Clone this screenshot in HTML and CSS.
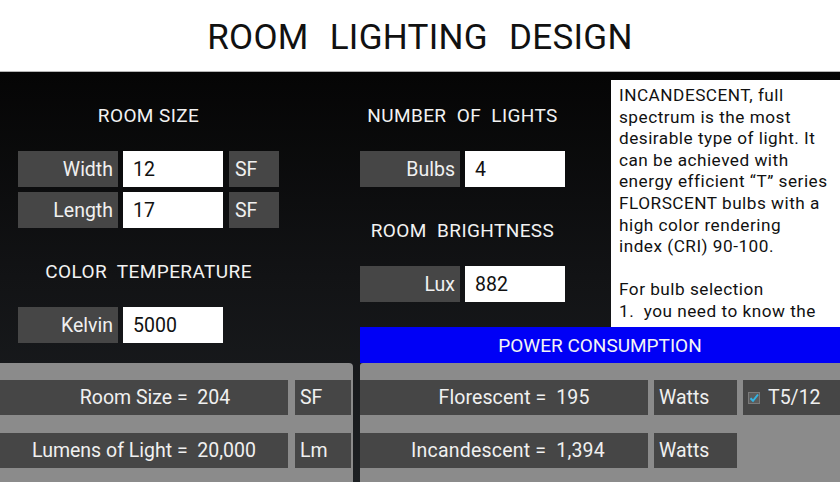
FILE: index.html
```html
<!DOCTYPE html>
<html>
<head>
<meta charset="utf-8">
<link rel="stylesheet" href="styles.css">
</head>
<body>
<div class="app">
  <header class="header"><h1 class="title">ROOM LIGHTING DESIGN</h1></header>
  <main class="main">
    <div class="col-left">
      <section class="section sec-left">
        <h2 class="heading">ROOM SIZE</h2>
        <div class="rows">
          <div class="row"><div class="label">Width</div><div class="input">12</div><div class="unit">SF</div></div>
          <div class="row"><div class="label">Length</div><div class="input">17</div><div class="unit">SF</div></div>
        </div>
      </section>
      <section class="section sec-left">
        <h2 class="heading">COLOR&nbsp; TEMPERATURE</h2>
        <div class="rows">
          <div class="row"><div class="label">Kelvin</div><div class="input">5000</div></div>
        </div>
      </section>
      <div class="panel panel-left">
        <div class="prow"><div class="result shift-a">Room Size =&nbsp; 204</div><div class="punit sf">SF</div></div>
        <div class="prow"><div class="result">Lumens of Light =&nbsp; 20,000</div><div class="punit sf">Lm</div></div>
      </div>
    </div>
    <div class="col-right">
      <div class="top-right">
        <div class="col-mid">
          <section class="section sec-mid">
            <h2 class="heading">NUMBER&nbsp; OF&nbsp; LIGHTS</h2>
            <div class="rows">
              <div class="row"><div class="label">Bulbs</div><div class="input">4</div></div>
            </div>
          </section>
          <section class="section sec-mid">
            <h2 class="heading">ROOM&nbsp; BRIGHTNESS</h2>
            <div class="rows">
              <div class="row"><div class="label">Lux</div><div class="input">882</div></div>
            </div>
          </section>
        </div>
        <div class="info">
          <p>INCANDESCENT, full<br>spectrum is the most<br>desirable type of light. It<br>can be achieved with<br>energy efficient “T” series<br>FLORSCENT bulbs with a<br>high color rendering<br>index (CRI) 90-100.</p>
          <p>For bulb selection<br>1.&nbsp; you need to know the</p>
        </div>
      </div>
      <div class="bar">POWER CONSUMPTION</div>
      <div class="panel panel-right">
        <div class="prow"><div class="result shift-b">Florescent =&nbsp; 195</div><div class="punit watts">Watts</div><div class="punit check"><svg class="cb" width="12" height="12" viewBox="0 0 12 12"><rect x="0.5" y="0.5" width="11" height="11" fill="#5c5c5c" stroke="#7a7a7a"/><path d="M2.5 6.2 L5 8.8 L10 2.5" fill="none" stroke="#33b5e5" stroke-width="2"/></svg><span>T5/12</span></div></div>
        <div class="prow"><div class="result shift-c">Incandescent =&nbsp; 1,394</div><div class="punit watts">Watts</div></div>
      </div>
    </div>
  </main>
</div>
</body>
</html>
```
FILE: styles.css
```css
* { box-sizing: border-box; margin: 0; padding: 0; }
html, body { width: 840px; height: 482px; overflow: hidden; }
body { font-family: Roboto, "Noto Sans", "Liberation Sans", sans-serif; background: #000; }
.app { width: 840px; height: 482px; display: flex; flex-direction: column; }
.header { height: 72px; background: #fff; border-bottom: 1px solid #b5b5b5; padding-top: 17px; text-align: center; }
.title { font-weight: 400; font-size: 35px; line-height: 41px; color: #111; word-spacing: 12px; letter-spacing: 0.3px; }
.main { flex: 1; display: flex; gap: 7px; background: linear-gradient(to bottom, #050505 0%, #121315 50%, #1d2023 100%); }
.col-left { width: 353px; display: flex; flex-direction: column; }
.col-right { flex: 1; display: flex; flex-direction: column; }
.section { display: flex; flex-direction: column; }
.sec-left { margin-left: 18px; width: 261px; }
.sec-mid { width: 205px; }
.heading { margin-top: 32px; height: 24px; line-height: 24px; font-size: 19px; font-weight: 400; color: #f2f2f2; text-align: center; white-space: nowrap; letter-spacing: 0.4px; }
.rows { margin-top: 23px; display: flex; flex-direction: column; gap: 5px; }
.row { display: flex; height: 36px; }
.label { width: 100px; background: #464646; color: #f0f0f0; font-size: 19.5px; display: flex; align-items: center; justify-content: flex-end; padding-right: 5px; }
.input { width: 100px; margin-left: 5px; background: #fff; color: #111; font-size: 19.5px; display: flex; align-items: center; padding-left: 10px; }
.unit { width: 50px; margin-left: 6px; background: #464646; color: #f0f0f0; font-size: 19.5px; display: flex; align-items: center; padding-left: 6px; }
.panel { margin-top: auto; height: 119px; background: #8b8b8b; padding-top: 17px; display: flex; flex-direction: column; gap: 18px; }
.panel-left { border-top-right-radius: 4px; }
.panel-right { margin-top: 0; border-top-left-radius: 3px; }
.prow { display: flex; height: 35px; }
.result { width: 288px; background: #464646; color: #f0f0f0; font-size: 19.5px; display: flex; align-items: center; justify-content: center; white-space: nowrap; }
.result.shift-a { padding-left: 22px; }
.result.shift-b { padding-left: 20px; letter-spacing: 0.1px; }
.result.shift-c { padding-left: 8px; letter-spacing: 0.2px; }
.punit { background: #464646; color: #f0f0f0; font-size: 19.5px; display: flex; align-items: center; white-space: nowrap; }
.sf { width: 56px; margin-left: 7px; padding-left: 5px; }
.watts { width: 83px; margin-left: 6px; padding-left: 5px; }
.check { flex: 1; margin-left: 6px; padding-left: 5px; gap: 8px; }
.cb { display: block; }
.top-right { height: 255px; display: flex; }
.col-mid { width: 251px; display: flex; flex-direction: column; }
.info { margin-top: 8px; flex: 1; background: #fff; color: #111; font-size: 17.2px; line-height: 21.6px; padding: 5px 0 0 8px; overflow: hidden; white-space: nowrap; letter-spacing: 0.5px; }
.info p + p { margin-top: 21.6px; }
.bar { height: 36px; background: #0000f6; color: #f4f4f4; font-size: 19px; display: flex; align-items: center; justify-content: center; }
```
